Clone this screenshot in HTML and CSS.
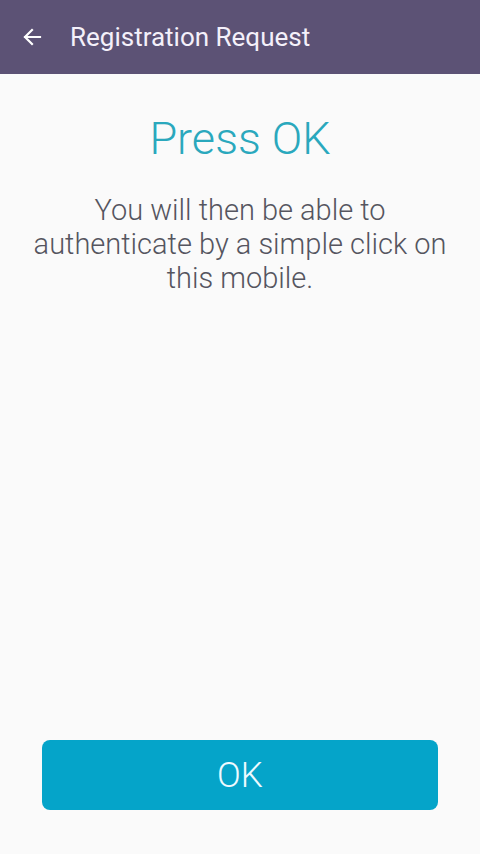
FILE: index.html
```html
<!DOCTYPE html>
<html>
<head>
    <title>Registration Request</title>
    <link rel="stylesheet" href="styles.css">
</head>
<body>
    <div class="app">
        <div class="toolbar">
            <svg class="back" width="24" height="24" viewBox="0 0 24 24">
                <path d="M20 12H5M12 5l-7 7 7 7" fill="none" stroke="#fff" stroke-width="2.2" stroke-linecap="square"/>
            </svg>
            <span class="toolbar-title">Registration Request</span>
        </div>
        <div class="content">
            <h1 class="headline">Press OK</h1>
            <p class="message">You will then be able to authenticate by a simple click on this mobile.</p>
        </div>
        <div class="footer">
            <button class="ok-button">OK</button>
        </div>
    </div>
</body>
</html>
```

FILE: styles.css
```css
body {
    margin: 0;
    background: #fafafa;
    font-family: Roboto, "Noto Sans", sans-serif;
}

.app {
    display: flex;
    flex-direction: column;
    height: 854px;
}

.toolbar {
    display: flex;
    align-items: center;
    height: 74px;
    padding-left: 20px;
    background: #5c5275;
    color: #f4f0fa;
}

.back {
    flex-shrink: 0;
}

.toolbar-title {
    margin-left: 26px;
    font-size: 26px;
    font-weight: 400;
}

.content {
    flex: 1;
    padding: 0 26px;
    text-align: center;
}

.headline {
    margin: 38px 0 0;
    font-size: 45px;
    font-weight: 300;
    color: #2aa8bd;
}

.message {
    margin: 28px 0 0;
    font-size: 29px;
    line-height: 34px;
    font-weight: 300;
    color: #55555f;
}

.footer {
    padding: 0 42px 44px;
}

.ok-button {
    display: block;
    width: 100%;
    height: 70px;
    border: none;
    border-radius: 8px;
    background: #05a4c9;
    color: #eefaff;
    font-family: Roboto, "Noto Sans", sans-serif;
    font-size: 35px;
    font-weight: 300;
}
```
